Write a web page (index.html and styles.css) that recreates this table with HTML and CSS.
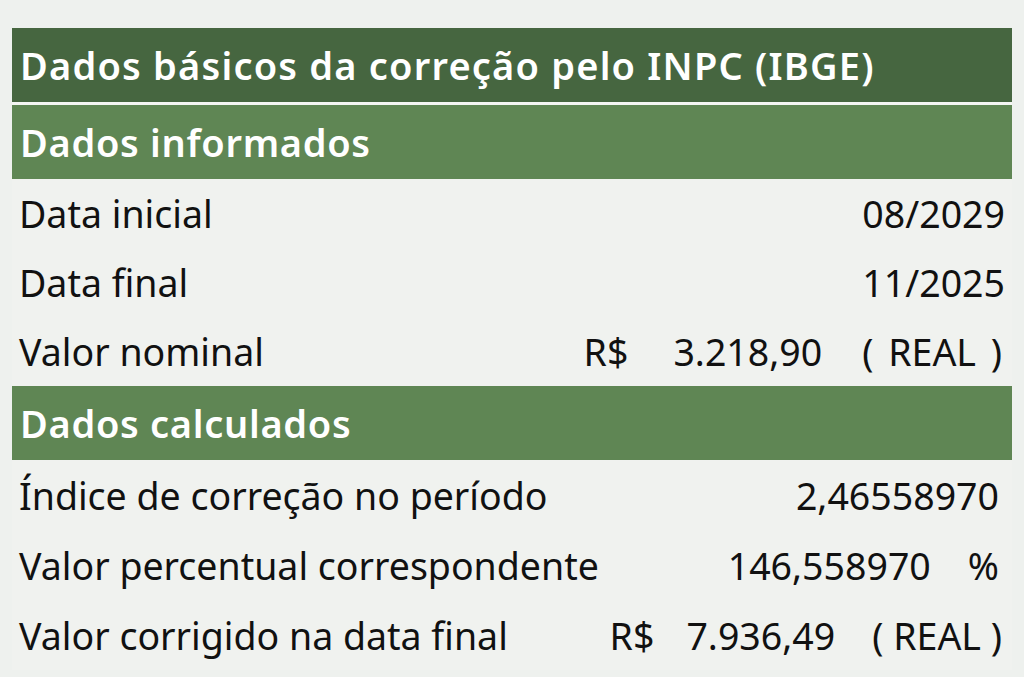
FILE: index.html
```html
<!DOCTYPE html>
<html lang="pt-BR">
<head>
<meta charset="utf-8">
<title>Correção INPC</title>
<link rel="stylesheet" href="styles.css">
</head>
<body>
<div class="sheet">
  <div class="title">Dados básicos da correção pelo INPC (IBGE)</div>
  <div class="section">Dados informados</div>
  <div class="row">
    <span class="label">Data inicial</span>
    <span class="vals date"><span>08/2029</span></span>
  </div>
  <div class="row">
    <span class="label">Data final</span>
    <span class="vals date"><span>11/2025</span></span>
  </div>
  <div class="row">
    <span class="label">Valor nominal</span>
    <span class="vals nominal"><span>R$</span><span>3.218,90</span><span class="unit">( REAL )</span></span>
  </div>
  <div class="section">Dados calculados</div>
  <div class="row tall">
    <span class="label">Índice de correção no período</span>
    <span class="vals pr"><span>2,46558970</span></span>
  </div>
  <div class="row tall">
    <span class="label">Valor percentual correspondente</span>
    <span class="vals pr pct"><span>146,558970</span><span>%</span></span>
  </div>
  <div class="row tall">
    <span class="label">Valor corrigido na data final</span>
    <span class="vals corr"><span>R$</span><span>7.936,49</span><span class="unit">( REAL )</span></span>
  </div>
</div>
</body>
</html>
```

FILE: styles.css
```css
html, body {
  margin: 0;
  padding: 0;
}
body {
  background: #eef1ee;
  font-family: "Noto Sans", "Open Sans", sans-serif;
  color: #111;
  width: 1024px;
  height: 677px;
  overflow: hidden;
}
.sheet {
  margin: 28px 12px 0 12px;
  width: 1000px;
  background: #f0f2ef;
  display: flex;
  flex-direction: column;
}
.title,
.section {
  height: 74px;
  color: #fff;
  font-weight: 600;
  font-size: 38px;
  letter-spacing: 1.2px;
  display: flex;
  align-items: center;
  padding-left: 8px;
}
.title {
  background: #466640;
  border-bottom: 3px solid #f4f6f3;
}
.section {
  background: #5f8654;
  letter-spacing: 0.7px;
}
.row {
  height: 69px;
  display: flex;
  align-items: center;
  justify-content: space-between;
  font-size: 37.5px;
  padding-left: 7px;
}
.row.tall {
  height: 70px;
}
.vals {
  display: flex;
  align-items: center;
}
.date { padding-right: 7px; }
.nominal { padding-right: 10px; }
.nominal span:nth-child(2) { margin-left: 45px; }
.nominal .unit { margin-left: 40px; word-spacing: 5px; }
.pr { padding-right: 13px; }
.pct span:nth-child(2) { margin-left: 37px; }
.corr { padding-right: 10px; }
.corr span:nth-child(2) { margin-left: 32px; }
.corr .unit { margin-left: 37px; }
```
